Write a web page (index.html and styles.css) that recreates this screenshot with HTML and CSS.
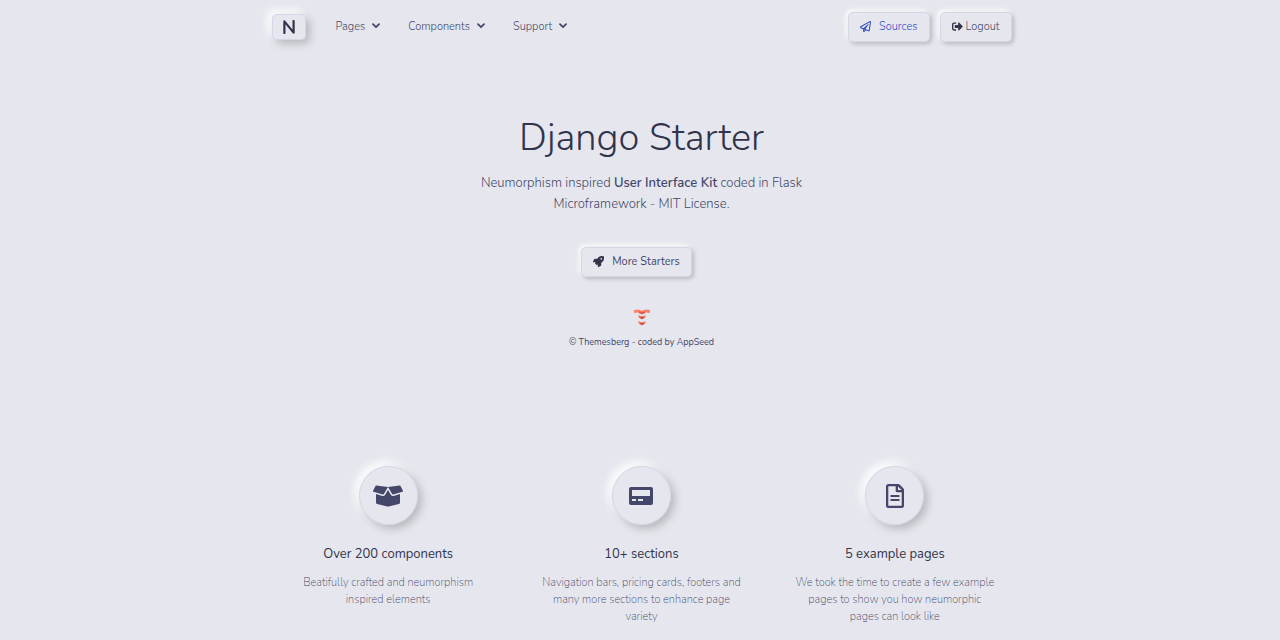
FILE: index.html
```html
<!DOCTYPE html>
<html lang="en">
<head>
<meta charset="utf-8">
<meta name="viewport" content="width=device-width, initial-scale=1">
<title>Django Starter</title>
<link rel="stylesheet" href="styles.css">
</head>
<body>
<header class="navbar">
  <a class="brand" href="#" aria-label="Home"><svg viewBox="0 0 12 14" aria-hidden="true"><path d="M1.4 13V1.4L10.6 12.6V1"/></svg></a>
  <nav class="menu">
    <a href="#">Pages <svg class="chevron" viewBox="0 0 8 6" aria-hidden="true"><path d="M1 1.2l3 3 3-3"/></svg></a>
    <a href="#">Components <svg class="chevron" viewBox="0 0 8 6" aria-hidden="true"><path d="M1 1.2l3 3 3-3"/></svg></a>
    <a href="#">Support <svg class="chevron" viewBox="0 0 8 6" aria-hidden="true"><path d="M1 1.2l3 3 3-3"/></svg></a>
  </nav>
  <div class="actions">
    <a class="btn btn-sources" href="#"><svg class="icon" viewBox="0 0 512 512" aria-hidden="true"><path d="M440 6.5L24 246.4c-34.4 19.9-31.1 70.8 5.7 85.9L144 379.6V464c0 46.4 59.2 65.5 86.6 28.6l43.8-59.1 111.9 46.2c5.9 2.4 12.1 3.6 18.3 3.6 8.2 0 16.3-2.1 23.6-6.2 12.8-7.2 21.6-20 23.9-34.5l59.4-387.2c6.1-40.1-36.9-68.8-71.5-48.9zM192 464v-64.6l36.6 15.1L192 464zm212.6-28.7l-153.8-63.5L391 169.5c10.7-15.5-9.5-33.5-23.7-21.2L155.8 332.6 48 288 464 48l-59.4 387.3z"/></svg>Sources</a>
    <a class="btn btn-logout" href="#"><svg class="icon" viewBox="0 0 512 512" aria-hidden="true"><path d="M497 273L329 441c-15 15-41 4.500-41-17v-96H152c-13.300 0-24-10.700-24-24v-96c0-13.300 10.700-24 24-24h136V88c0-21.400 25.900-32 41-17l168 168c9.300 9.400 9.300 24.600 0 34zM192 436v-40c0-6.600-5.400-12-12-12H96c-17.700 0-32-14.300-32-32V160c0-17.700 14.300-32 32-32h84c6.600 0 12-5.400 12-12V76c0-6.600-5.400-12-12-12H96c-53 0-96 43-96 96v192c0 53 43 96 96 96h84c6.600 0 12-5.400 12-12z"/></svg>Logout</a>
  </div>
</header>
<main>
  <section class="hero">
    <h1>Django Starter</h1>
    <p class="lead">Neumorphism inspired <strong>User Interface Kit</strong> coded in Flask Microframework - MIT License.</p>
    <a class="btn btn-more" href="#"><svg class="icon" viewBox="0 0 512 512" aria-hidden="true"><path d="M505.120 19.090c-1.190-5.530-6.660-11-12.210-12.180C460.610 0 435.460 0 410.360 0 307.200 0 245.270 55.200 199.050 128H94.870c-16.340.02-35.560 11.880-42.870 26.480L2.520 253.290A28.400 28.400 0 0 0 0 264a24 24 0 0 0 24 24h103.810l-22.460 22.470c-11.360 11.360-13 32.250 0 45.250L156.240 406.620c11.190 11.190 32.150 13.160 45.280 0L224 384.160V488a24 24 0 0 0 24 24 28.550 28.550 0 0 0 10.700-2.520l98.720-49.390c14.630-7.290 26.500-26.500 26.500-42.860V312.790c72.590-46.300 128-108.400 128-211.090.1-25.200.1-50.400-6.800-82.610zM384 168a40 40 0 1 1 40-40 40 40 0 0 1-40 40z"/></svg>More Starters</a>
    <svg class="themesberg" viewBox="0 0 16 17" aria-hidden="true">
      <path fill="#fb8266" d="M0 1l4.500-.6L8 1.800 11.500.4 16 1v3l-4-.4-4 1.600-4-1.600-4 .4z"/>
      <path fill="#d9584c" d="M5 2.200l3 1.200 3-1.200V4L8 5.200 5 4z"/>
      <path fill="#fb8266" d="M4.500 6L8 7.500 11.500 6v2.500L8 10.200 4.500 8.500zM4.500 12L8 13.500l3.500-1.500v2.500L8 16.200l-3.500-1.700z"/>
      <path fill="#c9534a" d="M5 8.400l3-.9 3 .9-3 1.800zM5 14.400l3-.9 3 .9-3 1.800z"/>
    </svg>
    <p class="credit">© Themesberg - coded by AppSeed</p>
  </section>
  <section class="features">
    <article class="feature">
      <div class="disc"><svg class="icon-box" viewBox="0 0 640 512" aria-hidden="true"><path d="M425.700 256c-16.900 0-32.800-9-41.400-23.400L320 126l-64.200 106.600c-8.700 14.500-24.600 23.500-41.500 23.500-4.500 0-9-.6-13.300-1.900L64 215v178c0 14.700 10 27.500 24.200 31l216.200 54.100c10.200 2.500 20.900 2.500 31 0L551.800 424c14.200-3.600 24.200-16.400 24.200-31V215l-137 39.100c-4.300 1.300-8.800 1.900-13.300 1.900zm212.600-112.200L586.800 41c-3.100-6.200-9.800-9.800-16.700-8.900L320 64l91.700 152.100c3.800 6.300 11.400 9.300 18.500 7.300l197.900-56.500c9.900-2.900 14.700-13.900 10.200-23.100zM53.200 41L1.700 143.800c-4.600 9.200.3 20.200 10.100 23l197.900 56.500c7.100 2 14.700-1 18.500-7.300L320 64 69.800 32.100c-6.900-.8-13.500 2.700-16.600 8.900z"/></svg></div>
      <h2>Over 200 components</h2>
      <p>Beatifully crafted and neumorphism inspired elements</p>
    </article>
    <article class="feature">
      <div class="disc"><svg class="icon-card" viewBox="0 0 24 18" aria-hidden="true"><path fill-rule="evenodd" d="M2 0h20a2 2 0 0 1 2 2v14a2 2 0 0 1-2 2H2a2 2 0 0 1-2-2V2a2 2 0 0 1 2-2zM3 3v6h18V3zM3 12v2h4v-2zM9 12v2h5v-2z"/></svg></div>
      <h2>10+ sections</h2>
      <p>Navigation bars, pricing cards, footers and many more sections to enhance page variety</p>
    </article>
    <article class="feature">
      <div class="disc"><svg class="icon-file" viewBox="0 0 18 24" aria-hidden="true"><path fill-rule="evenodd" d="M2.300 0h9.900c.6 0 1.200.2 1.600.7l3.500 3.500c.4.400.7 1 .7 1.600v15.900c0 1.300-1 2.300-2.300 2.300H2.300C1 24 0 23 0 21.700V2.300C0 1 1 0 2.300 0zM12 2.400V6h3.600zM2.300 2.300v19.400h13.400V8.200h-4.900c-.6 0-1.100-.5-1.100-1.100V2.300zM4.500 11h9v2h-9zM4.500 15h9v2h-9z"/></svg></div>
      <h2>5 example pages</h2>
      <p>We took the time to create a few example pages to show you how neumorphic pages can look like</p>
    </article>
  </section>
</main>
</body>
</html>
```
FILE: styles.css
```css
* { box-sizing: border-box; }
body {
  margin: 0;
  padding-left: 3px;
  background: #e6e7ee;
  color: #44476a;
  font-family: Nunito, "Nunito Sans", Lato, sans-serif;
  font-size: 11px;
  font-weight: 400;
  line-height: 17px;
}
a { color: inherit; text-decoration: none; }
h1, h2, p { margin: 0; }
svg { display: block; flex: none; fill: currentColor; }
.navbar {
  display: flex;
  align-items: center;
  max-width: 760px;
  margin: 0 auto;
  padding: 12px 10px;
}
.brand {
  display: flex;
  align-items: center;
  justify-content: center;
  width: 34px;
  height: 26px;
  border: 1px solid #d1d9e6;
  border-radius: 5px;
  color: #31344b;
  box-shadow: 4px 4px 9px #b8b9be, -4px -4px 9px #fff;
}
.brand svg { width: 12px; height: 14px; fill: none; stroke: currentColor; stroke-width: 2.2; stroke-linecap: round; stroke-linejoin: round; }
.menu { display: flex; gap: 28px; margin-left: 30px; padding-bottom: 2px; font-weight: 300; }
.menu a { display: flex; align-items: center; gap: 7px; }
.chevron { width: 8px; height: 6px; fill: none; stroke: currentColor; stroke-width: 1.8; stroke-linecap: round; stroke-linejoin: round; }
.actions { display: flex; gap: 10px; margin-left: auto; }
.btn {
  display: inline-flex;
  align-items: center;
  justify-content: center;
  height: 30px;
  padding: 0 11px 2px;
  border: 1px solid #d1d9e6;
  border-radius: 5px;
  color: #44476a;
  font-weight: 300;
  box-shadow: 2px 2px 4px #b8b9be, -2px -2px 4px #fff;
}
.icon { width: 11px; height: 11px; }
.btn-sources { gap: 8px; color: #2d4cc8; }
.btn-logout { gap: 3px; }
.btn-logout .icon, .btn-more .icon { color: #31344b; }
.hero {
  display: flex;
  flex-direction: column;
  align-items: center;
  padding-top: 60px;
  text-align: center;
}
h1 { color: #31344b; font-size: 38px; font-weight: 400; font-weight: 300; line-height: 48px; }
.lead { max-width: 350px; margin-top: 11px; font-size: 13px; font-weight: 300; line-height: 21px; }
.lead strong { font-weight: 600; }
.btn-more { margin: 32px 10px 0 0; gap: 8px; font-weight: 400; }
.themesberg { width: 16px; height: 17px; margin-top: 32px; }
.credit { margin-top: 8px; font-size: 9px; }
.features {
  display: grid;
  grid-template-columns: repeat(3, 1fr);
  max-width: 760px;
  margin: 115px auto 0;
  padding-bottom: 16px;
  text-align: center;
}
.feature { display: flex; flex-direction: column; align-items: center; padding: 0 26px; }
.disc {
  display: flex;
  align-items: center;
  justify-content: center;
  width: 59px;
  height: 59px;
  border: 1px solid #d1d9e6;
  border-radius: 50%;
  box-shadow: 4px 4px 9px #b8b9be, -4px -4px 9px #fff;
}
.icon-box { width: 30px; height: 24px; }
.icon-card { width: 24px; height: 18px; }
.icon-file { width: 18px; height: 24px; }
h2 { margin-top: 20px; color: #31344b; font-size: 13px; font-weight: 400; line-height: 18px; }
.feature p { margin-top: 11px; font-weight: 200; }
```
